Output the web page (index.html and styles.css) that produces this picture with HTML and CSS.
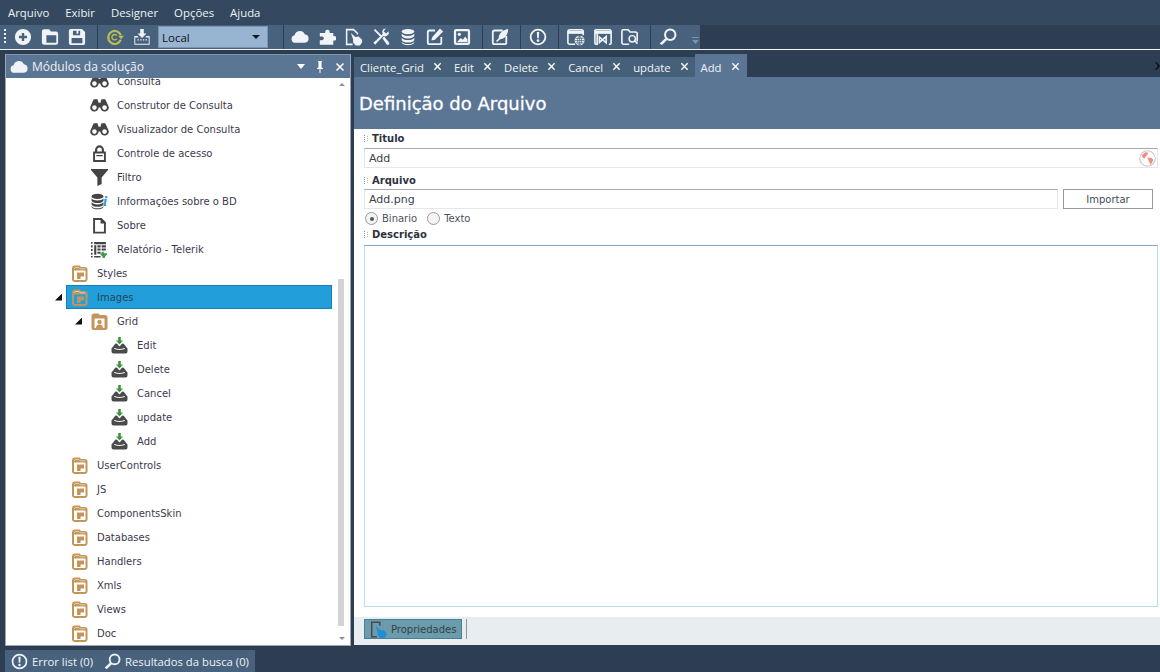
FILE: index.html
```html
<!DOCTYPE html>
<html lang="pt">
<head>
<meta charset="utf-8">
<title>Definição do Arquivo</title>
<link rel="stylesheet" href="styles.css">
</head>
<body>
<svg class="defs" width="0" height="0" aria-hidden="true">
  <symbol id="i-plus" viewBox="0 0 20 20"><path fill-rule="evenodd" d="M10 1a9 9 0 1 1 0 18a9 9 0 0 1 0-18zM8.700 5.500v3.200H5.500v2.600h3.200v3.200h2.600v-3.200h3.200V8.700h-3.200V5.500z"/></symbol>
  <symbol id="i-open" viewBox="0 0 20 20"><path fill-rule="evenodd" d="M3.500 1.500H9l2 2.500h5.500a2.500 2.500 0 0 1 2.500 2.500V16a2.500 2.500 0 0 1-2.500 2.500h-13A2.500 2.500 0 0 1 1 16V4a2.500 2.500 0 0 1 2.500-2.500zM6 8v8.500h11V8z"/></symbol>
  <symbol id="i-save" viewBox="0 0 20 20"><path fill-rule="evenodd" d="M3 1h12.500L19 4.500V17a2 2 0 0 1-2 2H3a2 2 0 0 1-2-2V3a2 2 0 0 1 2-2zM5.500 3v5h8V3h-2v3.500H9.500V3zM4 11v6h12v-6z"/></symbol>
  <symbol id="i-build" viewBox="0 0 20 20"><path fill="none" stroke="#b9c04f" stroke-width="2.400" d="M16.500 8A7.200 7.200 0 1 0 16.500 13"/><path fill="#b9c04f" d="M13.500 8.500h6.500l-3.200 4z"/><path fill="none" stroke="#b9c04f" stroke-width="1.500" d="M12 8.500a3 3 0 1 0 0 3.500"/></symbol>
  <symbol id="i-deploy" viewBox="0 0 20 20"><path d="M8 1h4v5h3l-5 5l-5-5h3z"/><path fill-rule="evenodd" d="M1.500 9H5l1.500 1.500H2.500v7h15v-7h-4L15 9h3.500v9.500h-17z"/><path d="M5 12.500h1.500V14H5zM8 12.500h1.500V14H8zM11 12.500h1.500V14H11zM14 12.500h1.500V14H14z"/></symbol>
  <symbol id="i-cloud" viewBox="0 0 20 20"><path d="M5 16.500a4.300 4.300 0 0 1-1-8.500a6 6 0 0 1 11.300-1A4.800 4.800 0 0 1 15.500 16.500z"/></symbol>
  <symbol id="i-puzzle" viewBox="0 0 20 20"><path d="M8 4.500a2.500 2.500 0 0 1 5 0v1h4V9h1a2.500 2.500 0 0 1 0 5h-1v4.500H2v-5h2.500a2 2 0 0 0 0-4H2V5.500h6z"/></symbol>
  <symbol id="i-hand" viewBox="0 0 20 20"><path fill="none" stroke="currentColor" stroke-width="1.700" d="M8.500 18.200H1.800V1.800h7.700l4.300 4v1.500"/><path d="M6.500 5.500l5 4.500l3.500-.5l4 3.500v3l-2.500 3.500h-4.500l-3-3.500v-3.500z"/></symbol>
  <symbol id="i-tools" viewBox="0 0 20 20"><path d="M3.500 1l7 7l1.500-1.500a4.500 4.500 0 0 1 1-5.500l2.500-.5l-2.500 3l2.500 2.500l3-2.500a4.500 4.500 0 0 1-6 5.500L3.500 18.500l-2-2L9 9.500L2 2.500z"/><path d="M11.500 11.500l2-2l5.500 6.500v2.500h-2.500z"/></symbol>
  <symbol id="i-db" viewBox="0 0 20 20"><ellipse cx="10" cy="4" rx="7" ry="3"/><path d="M3 6.200c1 1.800 3.500 2.600 7 2.600s6-.8 7-2.600V9c-1 1.800-3.500 2.700-7 2.700S4 10.800 3 9zM3 10.700c1 1.800 3.500 2.700 7 2.700s6-.9 7-2.700v2.800c-1 1.800-3.500 2.700-7 2.700s-6-.9-7-2.700zM3 15.200c1 1.800 3.500 2.700 7 2.700s6-.9 7-2.700v1.300c-1 1.800-3.500 2.700-7 2.700s-6-.9-7-2.700z"/></symbol>
  <symbol id="i-edit" viewBox="0 0 20 20"><path fill="none" stroke="currentColor" stroke-width="2" d="M10 2.800H4a2 2 0 0 0-2 2V16a2 2 0 0 0 2 2h11a2 2 0 0 0 2-2v-6"/><path d="M15.500.5l3.500 3.500L10 13l-4 1l1-4z"/></symbol>
  <symbol id="i-image" viewBox="0 0 20 20"><path fill-rule="evenodd" d="M3.500 1h13A2.500 2.500 0 0 1 19 3.500v13a2.500 2.500 0 0 1-2.500 2.500h-13A2.500 2.500 0 0 1 1 16.500v-13A2.500 2.500 0 0 1 3.500 1zM3.500 3.500v13h13v-13z"/><circle cx="7" cy="7" r="1.800"/><path d="M4.500 15.500l4-4.500l2.500 2l2.500-3.500l2.500 3v3z"/></symbol>
  <symbol id="i-leaf" viewBox="0 0 20 20"><path fill="none" stroke="currentColor" stroke-width="2" d="M13 2.800H4a2 2 0 0 0-2 2V16a2 2 0 0 0 2 2h11a2 2 0 0 0 2-2V9"/><path d="M19 1c0 6-3 11-9 11.500L7 15.500L5.500 14.500l3-3C8.500 6 13 2 19 1z"/></symbol>
  <symbol id="i-alert" viewBox="0 0 20 20"><circle cx="10" cy="10" r="8.200" fill="none" stroke="currentColor" stroke-width="2"/><path d="M8.700 4.500h2.600l-.4 7H9.100z"/><circle cx="10" cy="14" r="1.500"/></symbol>
  <symbol id="i-web" viewBox="0 0 20 20"><path fill="none" stroke="currentColor" stroke-width="1.800" d="M9 18H3a2 2 0 0 1-2-2V4a2 2 0 0 1 2-2h13a2 2 0 0 1 2 2v4"/><path d="M1 3h17v3.500H1z"/><circle cx="14" cy="14" r="5.500"/><path fill="none" stroke="#48617d" stroke-width=".8" d="M8.500 14h11M14 8.500v11M9.500 11.500h9M9.500 16.500h9M14 8.500c-3 3-3 8 0 11M14 8.500c3 3 3 8 0 11"/></symbol>
  <symbol id="i-vs" viewBox="0 0 20 20"><path fill="none" stroke="currentColor" stroke-width="1.800" d="M3.500 5v13H2a1 1 0 0 1-1-1V3a1 1 0 0 1 1-1h15a2 2 0 0 1 2 2v13a1 1 0 0 1-1 1h-1.500"/><path d="M1 3h18v3.500H1z"/><path fill="none" stroke="currentColor" stroke-width="1.800" d="M6 10l7.500 6.500V9.500L6 16z"/></symbol>
  <symbol id="i-fsearch" viewBox="0 0 20 20"><path fill="none" stroke="currentColor" stroke-width="1.800" d="M9 18H3a2 2 0 0 1-2-2V3.500a1.500 1.500 0 0 1 1.500-1.500H8l2 2.500h6a2 2 0 0 1 2 2V15"/><circle cx="12.500" cy="12" r="3.500" fill="none" stroke="currentColor" stroke-width="1.600"/><path d="M14.800 15l1.200-1.200l3 3L17.800 18z"/></symbol>
  <symbol id="i-search" viewBox="0 0 20 20"><circle cx="12.500" cy="7.500" r="5.800" fill="none" stroke="currentColor" stroke-width="2.200"/><path d="M7.500 10.800l2 2L3.200 19l-2.400-1.800z"/></symbol>
  <symbol id="i-x" viewBox="0 0 10 10"><path fill="none" stroke="currentColor" stroke-width="1.500" d="M1.500 1.500l7 7M8.500 1.500l-7 7"/></symbol>
  <symbol id="i-pin" viewBox="0 0 10 12"><path d="M3 0h4v1H6.500v5L8 7.500V8H5.500v4h-1V8H2v-.5L3.500 6V1H3z"/></symbol>
  <symbol id="i-binoc" viewBox="0 0 18 14"><path fill-rule="evenodd" d="M3.500 1h3.700L8 4.500h2L10.800 1h3.700L17.800 8.500a4 4 0 1 1-8 .5h-1.600a4 4 0 1 1-8-.5zM4.200 6.800a2.200 2.200 0 1 0 0 4.400a2.200 2.200 0 0 0 0-4.400zM13.800 6.800a2.200 2.200 0 1 0 0 4.400a2.200 2.200 0 0 0 0-4.400z"/></symbol>
  <symbol id="i-lock" viewBox="0 0 14 16"><path fill-rule="evenodd" d="M2.800 6V4.500a4.200 4.200 0 0 1 8.400 0V6H13v10H1V6zM4.800 6h4.400V4.500a2.200 2.200 0 0 0-4.400 0zM2.800 8v6.200h8.400V8zM4 9.500h6v1.200H4z"/></symbol>
  <symbol id="i-funnel" viewBox="0 0 16 16"><path d="M0 0h16v1L10 8v6l-4 2V8L0 1z"/></symbol>
  <symbol id="i-doc" viewBox="0 0 14 16"><path fill-rule="evenodd" d="M1 1h8l4 4v10.500H1zM2.800 2.800v11h8.400V6H8V2.800z"/></symbol>
  <symbol id="i-report" viewBox="0 0 16 16"><path fill="#444" d="M0 1h1.500v1.500H0zM0 4h1.500v2H0zM0 7.500h1.500v2H0zM0 11h1.500v2H0zM0 14h1.500v1.500H0zM3 1h11v2H3zM3 4h2v9H3zM6 4h3v2H6zM10 4h4v2h-4zM6 7h3v2H6zM10 7h4v2h-4zM6 10h3v2H6zM3 14h6v1.500H3z"/><path fill="#3f9a4a" d="M10 10h2v1.500h3V13l-1.500 1l-.5 2h-2l-.5-2L9 13v-1.500h1z"/></symbol>
  <symbol id="i-folder" viewBox="0 0 17 17"><path fill="#c4955a" fill-rule="evenodd" d="M4 .5h4.500L10 2h3.500a3 3 0 0 1 3 3v9a3 3 0 0 1-3 3H4a3 3 0 0 1-3-3V3.500a3 3 0 0 1 3-3zM3 5.500V15h11.500V5.500z"/><path fill="#c4955a" d="M6 7.500h7v4H9.500v2.500H6z"/><path fill="none" stroke="#fff" stroke-width=".7" stroke-opacity=".75" d="M3.500 4V3.500a1 1 0 0 1 1-1H8l1.200 1.300H14"/></symbol>
  <symbol id="i-folder-user" viewBox="0 0 17 17"><path fill="#c4955a" fill-rule="evenodd" d="M3 .5h4.500L9 2h5a2.500 2.500 0 0 1 2.500 2.500V15a2 2 0 0 1-2 2h-12a2 2 0 0 1-2-2V3A2.500 2.500 0 0 1 3 .5zM3.500 5.500V15h10V5.500z"/><circle cx="8.500" cy="9" r="2.200" fill="#c4955a"/><path fill="#c4955a" d="M5 15c0-2.500 1.500-3.500 3.500-3.500S12 12.500 12 15z"/></symbol>
  <symbol id="i-tray" viewBox="0 0 17 17"><path fill="#3d9440" d="M7.200 0h2.600v3.500H12L8.500 7.500L5 3.500h2.200z"/><path fill="#4a4a4a" fill-rule="evenodd" d="M4.500 6.500L6 6.800L8.500 9.500L11 6.800L12.500 6.500L16.500 11.500V14.500A2 2 0 0 1 14.500 16.500H2.500A2 2 0 0 1 .5 14.500V11.500zM3 11.800c2 1.500 9 1.500 11 0l-.6-.8c-3 1.200-6.800 1.200-9.800 0z"/></symbol>
  <symbol id="i-touch" viewBox="0 0 20 20"><path fill="none" stroke="#4a4a4a" stroke-width="1.800" d="M8 18.500H2V1.500h9.500v4"/><path fill="#1f8fd6" d="M6.500 6l6 5l3.500-.5l3.500 3.500v3L17 20h-5.500L9 16l-.5-4z"/></symbol>
  <symbol id="i-globe" viewBox="0 0 16 16"><circle cx="8" cy="8" r="7.300" fill="#fff" stroke="#c9c9c9"/><path fill="#f58a80" d="M2.500 5L6 2l3 .5L7 5.500L5 8L3.500 7zM8 7l4 .5l1.500 2L11 14l-1.500-3z"/></symbol>
</svg>

<div class="app">
  <nav class="menu">
    <span class="menu-item">Arquivo</span>
    <span class="menu-item">Exibir</span>
    <span class="menu-item">Designer</span>
    <span class="menu-item">Opções</span>
    <span class="menu-item">Ajuda</span>
  </nav>

  <div class="toolbar">
    <span class="grip"></span>
    <span class="tb"><svg class="ic"><use href="#i-plus"/></svg></span>
    <span class="tb"><svg class="ic"><use href="#i-open"/></svg></span>
    <span class="tb"><svg class="ic"><use href="#i-save"/></svg></span>
    <span class="sep"></span>
    <span class="tb"><svg class="ic"><use href="#i-build"/></svg></span>
    <span class="tb"><svg class="ic"><use href="#i-deploy"/></svg></span>
    <div class="combo"><span>Local</span><i class="combo-arrow"></i></div>
    <span class="sep sep-combo"></span>
    <span class="tb"><svg class="ic"><use href="#i-cloud"/></svg></span>
    <span class="tb"><svg class="ic"><use href="#i-puzzle"/></svg></span>
    <span class="tb"><svg class="ic"><use href="#i-hand"/></svg></span>
    <span class="tb"><svg class="ic"><use href="#i-tools"/></svg></span>
    <span class="tb"><svg class="ic"><use href="#i-db"/></svg></span>
    <span class="tb"><svg class="ic"><use href="#i-edit"/></svg></span>
    <span class="tb"><svg class="ic"><use href="#i-image"/></svg></span>
    <span class="sep"></span>
    <span class="tb"><svg class="ic"><use href="#i-leaf"/></svg></span>
    <span class="sep"></span>
    <span class="tb"><svg class="ic"><use href="#i-alert"/></svg></span>
    <span class="sep"></span>
    <span class="tb"><svg class="ic"><use href="#i-web"/></svg></span>
    <span class="tb"><svg class="ic"><use href="#i-vs"/></svg></span>
    <span class="tb"><svg class="ic"><use href="#i-fsearch"/></svg></span>
    <span class="sep"></span>
    <span class="tb"><svg class="ic"><use href="#i-search"/></svg></span>
    <span class="overflow"></span>
  </div>

  <main class="workspace">
    <section class="panel">
      <header class="panel-head">
        <svg class="panel-cloud"><use href="#i-cloud"/></svg>
        <span class="panel-title">Módulos da solução</span>
        <i class="panel-drop"></i>
        <svg class="panel-pin"><use href="#i-pin"/></svg>
        <svg class="panel-x"><use href="#i-x"/></svg>
      </header>
      <div class="tree-box">
        <ul class="tree">
          <li class="row l2"><div class="node"><svg class="ti ti-wide"><use href="#i-binoc"/></svg><span>Consulta</span></div></li>
          <li class="row l2"><div class="node"><svg class="ti ti-wide"><use href="#i-binoc"/></svg><span>Construtor de Consulta</span></div></li>
          <li class="row l2"><div class="node"><svg class="ti ti-wide"><use href="#i-binoc"/></svg><span>Visualizador de Consulta</span></div></li>
          <li class="row l2"><div class="node"><svg class="ti"><use href="#i-lock"/></svg><span>Controle de acesso</span></div></li>
          <li class="row l2"><div class="node"><svg class="ti"><use href="#i-funnel"/></svg><span>Filtro</span></div></li>
          <li class="row l2"><div class="node"><div class="ti-db"><svg class="ti-db-ic"><use href="#i-db"/></svg><em class="info">i</em></div><span>Informações sobre o BD</span></div></li>
          <li class="row l2"><div class="node"><svg class="ti"><use href="#i-doc"/></svg><span>Sobre</span></div></li>
          <li class="row l2"><div class="node"><svg class="ti"><use href="#i-report"/></svg><span>Relatório - Telerik</span></div></li>
          <li class="row l1"><div class="node"><svg class="ti"><use href="#i-folder"/></svg><span>Styles</span></div></li>
          <li class="row l1"><i class="arrow"></i><div class="node selected"><svg class="ti"><use href="#i-folder"/></svg><span>Images</span></div></li>
          <li class="row l2"><i class="arrow"></i><div class="node"><svg class="ti"><use href="#i-folder-user"/></svg><span>Grid</span></div></li>
          <li class="row l3"><div class="node"><svg class="ti"><use href="#i-tray"/></svg><span>Edit</span></div></li>
          <li class="row l3"><div class="node"><svg class="ti"><use href="#i-tray"/></svg><span>Delete</span></div></li>
          <li class="row l3"><div class="node"><svg class="ti"><use href="#i-tray"/></svg><span>Cancel</span></div></li>
          <li class="row l3"><div class="node"><svg class="ti"><use href="#i-tray"/></svg><span>update</span></div></li>
          <li class="row l3"><div class="node"><svg class="ti"><use href="#i-tray"/></svg><span>Add</span></div></li>
          <li class="row l1"><div class="node"><svg class="ti"><use href="#i-folder"/></svg><span>UserControls</span></div></li>
          <li class="row l1"><div class="node"><svg class="ti"><use href="#i-folder"/></svg><span>JS</span></div></li>
          <li class="row l1"><div class="node"><svg class="ti"><use href="#i-folder"/></svg><span>ComponentsSkin</span></div></li>
          <li class="row l1"><div class="node"><svg class="ti"><use href="#i-folder"/></svg><span>Databases</span></div></li>
          <li class="row l1"><div class="node"><svg class="ti"><use href="#i-folder"/></svg><span>Handlers</span></div></li>
          <li class="row l1"><div class="node"><svg class="ti"><use href="#i-folder"/></svg><span>Xmls</span></div></li>
          <li class="row l1"><div class="node"><svg class="ti"><use href="#i-folder"/></svg><span>Views</span></div></li>
          <li class="row l1"><div class="node"><svg class="ti"><use href="#i-folder"/></svg><span>Doc</span></div></li>
        </ul>
        <i class="sb-up"></i>
        <i class="sb-thumb"></i>
        <i class="sb-down"></i>
      </div>
    </section>

    <section class="doc">
      <div class="tabs">
        <div class="tab-group">
          <div class="tab"><span>Cliente_Grid</span><svg class="tab-x"><use href="#i-x"/></svg></div>
          <div class="tab"><span>Edit</span><svg class="tab-x"><use href="#i-x"/></svg></div>
          <div class="tab"><span>Delete</span><svg class="tab-x"><use href="#i-x"/></svg></div>
          <div class="tab"><span>Cancel</span><svg class="tab-x"><use href="#i-x"/></svg></div>
          <div class="tab"><span>update</span><svg class="tab-x"><use href="#i-x"/></svg></div>
        </div>
        <div class="tab active"><span>Add</span><svg class="tab-x"><use href="#i-x"/></svg></div>
        <span class="tabs-more"></span>
      </div>
      <h1 class="doc-title">Definição do Arquivo</h1>
      <form class="form">
        <label class="lbl lbl-first"><i class="dots"></i>Titulo</label>
        <div class="field"><span>Add</span><svg class="globe"><use href="#i-globe"/></svg></div>
        <label class="lbl lbl-file"><i class="dots"></i>Arquivo</label>
        <div class="file-row">
          <div class="field field-file"><span>Add.png</span></div>
          <div class="btn">Importar</div>
        </div>
        <div class="radios">
          <span class="radio on"></span><span class="r-text">Binario</span>
          <span class="radio"></span><span class="r-text">Texto</span>
        </div>
        <label class="lbl lbl-desc"><i class="dots"></i>Descrição</label>
        <div class="area"></div>
      </form>
      <footer class="doc-foot">
        <div class="prop"><svg class="prop-ic"><use href="#i-touch"/></svg><span>Propriedades</span></div>
        <span class="foot-sep"></span>
      </footer>
    </section>
  </main>

  <div class="status">
    <div class="status-tabs">
      <span class="st"><svg class="st-ic"><use href="#i-alert"/></svg>Error list (0)</span>
      <span class="st"><svg class="st-ic"><use href="#i-search"/></svg>Resultados da busca (0)</span>
    </div>
  </div>
</div>
</body>
</html>
```

FILE: styles.css
```css
* { box-sizing: border-box; }
html, body { margin: 0; padding: 0; height: 100%; }
body { background: #2d3e52; overflow: hidden; font-family: "Open Sans", "Noto Sans", sans-serif; }
.defs { display: block; height: 0; }
.app { width: 1160px; height: 672px; display: flex; flex-direction: column; }

.menu { height: 25px; flex: none; background: #34495f; display: flex; align-items: center; padding-left: 8px; gap: 16px; color: #eef2f6; font-size: 11.4px; }
.menu-item { line-height: 25px; }

.toolbar { width: 700px; height: 24px; flex: none; background: #48617d; display: flex; align-items: center; color: #f1f4f7; position: relative; }
.grip { width: 2px; height: 16px; margin-left: 4px; margin-right: 3.5px; background: repeating-linear-gradient(#f2f2f2 0 2px, transparent 2px 4px); }
.tb { width: 27px; height: 24px; display: flex; align-items: center; justify-content: center; }
.ic { width: 18px; height: 18px; fill: currentColor; }
.sep { width: 1px; height: 24px; background: #2b3e53; margin: 0 3px 0 7px; }
.toolbar .tb:nth-child(4) + .sep { margin-left: 6.5px; }
.sep-combo { margin-left: 15px; margin-right: 2px; }
.combo { width: 110px; height: 22px; margin-left: 3px; background: #98b4d3; border: 1px solid #7e93aa; display: flex; align-items: center; justify-content: space-between; padding: 0 7px 0 3px; color: #111; font-size: 11.5px; }
.combo-arrow { width: 0; height: 0; border-left: 4px solid transparent; border-right: 4px solid transparent; border-top: 4px solid #1a1a1a; }
.overflow { width: 7px; height: 7px; margin-left: 11px; margin-top: 7px; border-top: 1px solid #7f93a8; border-bottom: 4px solid #7f93a8; clip-path: polygon(0 0, 100% 0, 100% 40%, 50% 100%, 0 40%); }

.workspace { height: 601px; flex: none; border-top: 1px solid #f2f5f7; padding-top: 4px; display: flex; gap: 3px; padding-left: 5px; }

.panel { width: 346px; height: 592px; background: #fff; border: 1px solid #9ea6b0; border-top: 0; display: flex; flex-direction: column; }
.panel-head { height: 24px; background: #5b7595; border-top: 1px solid #8194ac; color: #eef2f6; display: flex; align-items: center; padding-left: 4px; flex: none; }
.panel-cloud { width: 18px; height: 18px; fill: #f1f4f7; }
.panel-title { font-size: 12px; margin-left: 4px; flex: 1; }
.panel-drop { width: 0; height: 0; border-left: 4.5px solid transparent; border-right: 4.5px solid transparent; border-top: 5px solid #fff; margin-right: 10px; }
.panel-pin { width: 10px; height: 12px; fill: #fff; margin-right: 10px; }
.panel-x { width: 10px; height: 10px; color: #fff; margin-right: 5px; }

.tree-box { flex: 1; overflow: hidden; position: relative; }
.tree { list-style: none; margin: -9px 0 0; padding: 0; width: 326px; font-family: "DejaVu Sans", sans-serif; font-size: 10px; color: #3a3a4e; }
.row { height: 24px; display: flex; align-items: center; }
.l1 { padding-left: 60px; }
.l2 { padding-left: 80px; }
.l3 { padding-left: 100px; }
.node { flex: 1; height: 24px; display: flex; align-items: center; padding-left: 5px; }
.node span:last-child { margin-left: 9px; white-space: nowrap; }
.selected { background: #229fdb; border: 1px solid #1580b5; padding-left: 4px; color: #24445a; }
.ti { width: 17px; height: 17px; fill: #444; flex: none; }
.ti-wide { width: 19px; margin: 0 -1px; }
.ti-db { position: relative; width: 17px; height: 17px; flex: none; }
.ti-db-ic { position: absolute; left: -2px; top: 0; width: 17px; height: 17px; fill: #444; }
.info { position: absolute; left: 12px; top: 0; font: italic bold 15px/17px "Liberation Serif", serif; color: #1d9ad8; }
.arrow { width: 7px; height: 7px; margin-left: -11px; margin-right: 4px; background: #111; clip-path: polygon(100% 0, 100% 100%, 0 100%); }
.sb-up, .sb-down { position: absolute; left: 333px; width: 0; height: 0; border-left: 3px solid transparent; border-right: 3px solid transparent; }
.sb-up { top: 5px; border-bottom: 3px solid #8d8d8d; }
.sb-down { top: 559px; border-top: 3px solid #8d8d8d; }
.sb-thumb { position: absolute; left: 332px; top: 201px; width: 6px; height: 347px; background: #d5d3d3; }

.doc { width: 806px; display: flex; flex-direction: column; height: 591px; }
.tabs { height: 23px; display: flex; align-items: flex-end; position: relative; flex: none; font-size: 11.3px; color: #f1f4f7; }
.tab-group { display: flex; height: 20px; background: #466079; }
.tab { display: flex; align-items: center; height: 20px; padding-left: 6px; }
.tab-x { width: 9px; height: 9px; color: #fff; margin: -2px 6px 0 9px; }
.tab.active { height: 23px; background: #5b7595; padding-top: 3px; }
.tab.active .tab-x { margin-right: 7px; }
.tabs-more { position: absolute; right: 0; top: 8px; width: 5px; height: 8px; background: #0b0b0b; clip-path: polygon(0 0, 25% 0, 100% 50%, 25% 100%, 0 100%, 60% 50%); }
.doc-title { margin: 0; height: 52px; flex: none; background: #5b7595; color: #fff; font: normal 18px/54px "DejaVu Sans", sans-serif; padding-left: 5px; -webkit-text-stroke: .3px #fff; }

.form { flex: 1; background: #fff; padding: 3px 2px 0 10px; display: flex; flex-direction: column; font-family: "DejaVu Sans", sans-serif; font-size: 10px; color: #333a44; min-height: 0; }
.lbl { height: 13px; line-height: 13px; font-weight: bold; display: flex; align-items: center; color: #2c3340; flex: none; }
.lbl-file { margin-top: 6px; }
.lbl-desc { margin-top: 1px; }
.dots { width: 8px; height: 8px; background: repeating-linear-gradient(#8f959b 0 1px, transparent 1px 2px) 0 0 / 1px 100% no-repeat, repeating-linear-gradient(#b4b9be 0 1px, transparent 1px 2px) 3px 1px / 1px 6px no-repeat; }
.field { height: 20px; flex: none; margin-top: 3px; border: 1px solid #e3e8ec; border-top-color: #a9a9a9; font-size: 11px; display: flex; align-items: center; justify-content: space-between; padding: 0 1px 0 4px; color: #3a3f48; }
.globe { width: 17px; height: 17px; }
.file-row { display: flex; gap: 5px; margin-top: 2px; padding-right: 5px; flex: none; }
.field-file { flex: 1; margin-top: 0; }
.btn { width: 90px; height: 20px; border: 1px solid #9a9a9a; text-align: center; line-height: 19px; font-size: 10px; color: #444c55; }
.radios { height: 17px; flex: none; margin-top: 1px; display: flex; align-items: center; }
.radio { width: 13px; height: 13px; border-radius: 50%; border: 1px solid #9a9a9a; background: #f4f4f4; position: relative; margin-left: 1px; flex: none; }
.radio.on::after { content: ""; position: absolute; left: 3.5px; top: 3.5px; width: 4px; height: 4px; border-radius: 50%; background: #555; }
.r-text { margin: 0 9px 0 4px; color: #4a525c; }
.area { flex: 1; margin-top: 4px; margin-bottom: 10px; border: 1px solid #b9dfee; border-top-color: #7fa7c0; }
.doc-foot { height: 28px; flex: none; background: #e8eef0; display: flex; align-items: flex-start; padding: 2px 0 0 10px; }
.prop { width: 98px; height: 20px; background: #6c9bab; border: 1px solid #47809a; display: flex; align-items: center; padding-left: 5px; font: 10px "DejaVu Sans", sans-serif; color: #33424a; }
.prop-ic { width: 17px; height: 17px; margin-right: 4px; }
.foot-sep { width: 1px; height: 20px; background: #8b9aa0; margin-left: 4px; }

.status { height: 22px; flex: none; padding-left: 5px; }
.status-tabs { width: 250px; height: 22px; background: #48617d; display: flex; align-items: center; padding-left: 6px; gap: 11px; color: #eef2f6; font-size: 11.3px; }
.st { display: flex; align-items: center; gap: 4px; white-space: nowrap; }
.st-ic { width: 17px; height: 17px; fill: currentColor; }
```
